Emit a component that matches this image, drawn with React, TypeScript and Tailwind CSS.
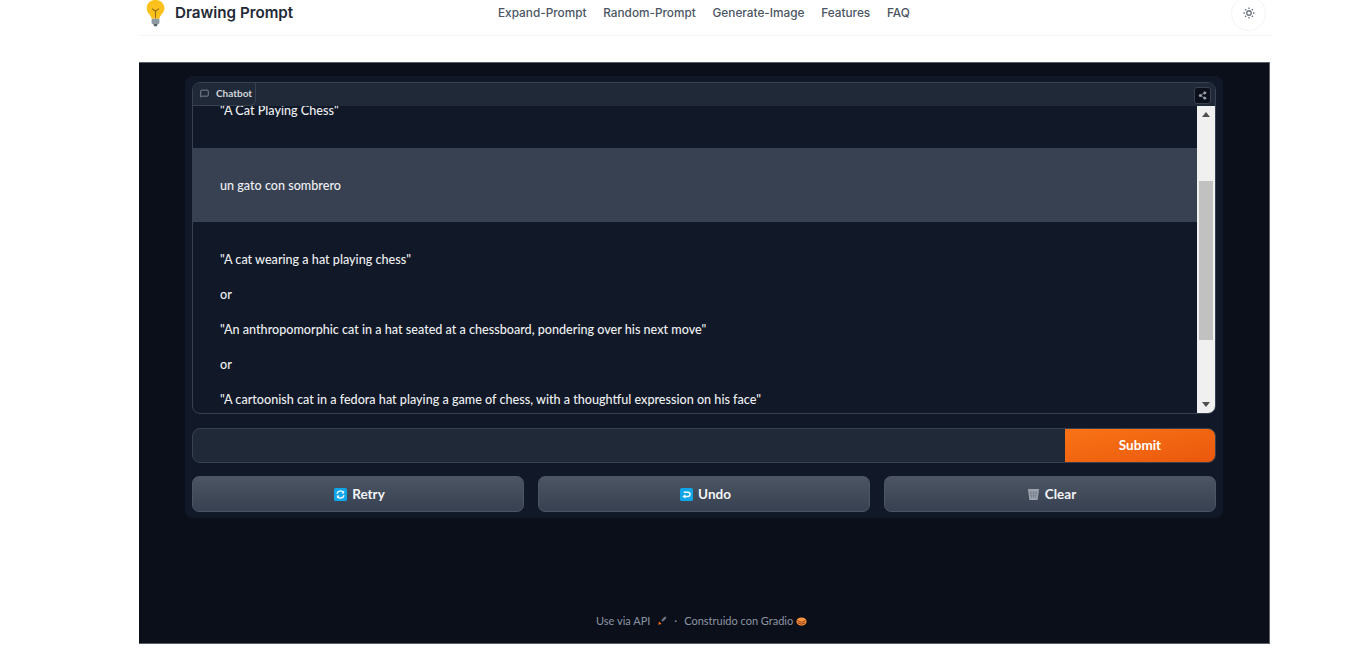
import { Share2, MessageSquare } from "lucide-react";

const NAV = ["Expand-Prompt", "Random-Prompt", "Generate-Image", "Features", "FAQ"];

function Bulb() {
  return (
    <svg viewBox="0 0 24 32" className="h-[28px] w-[21px] shrink-0">
      <path d="M12 1C6 1 2 5.2 2 10.5c0 3.4 1.7 5.6 3.3 7.6 1.2 1.5 2 2.8 2.2 4.4h9c.2-1.6 1-2.9 2.2-4.4 1.6-2 3.5-4.2 3.5-7.6C22 5.2 18 1 12 1z" fill="#fcc21b" />
      <path d="M8 11l4 3 4-3M12 14v8" fill="none" stroke="#8a6a12" strokeWidth="1.2" />
      <rect x="7.5" y="22.5" width="9" height="6" rx="1.5" fill="#8d9aa3" />
      <path d="M9.5 28.5h5l-1 2.5h-3z" fill="#57636b" />
    </svg>
  );
}

function Sun() {
  return (
    <svg viewBox="0 0 24 24" className="h-[12px] w-[12px]" fill="none" stroke="#6b7280" strokeWidth="2.6">
      <circle cx="12" cy="12" r="4.5" />
      <path d="M12 1v3M12 20v3M1 12h3M20 12h3M4.2 4.2l2.2 2.2M17.6 17.6l2.2 2.2M4.2 19.8l2.2-2.2M17.6 6.4l2.2-2.2" />
    </svg>
  );
}

function RetryIcon() {
  return (
    <svg viewBox="0 0 14 14" className="h-[13px] w-[13px]">
      <rect width="14" height="14" rx="2" fill="#0ea5e9" />
      <path d="M3.2 6.2A3.9 3.9 0 0 1 10 4.6M10.8 7.8A3.9 3.9 0 0 1 4 9.4" fill="none" stroke="#fff" strokeWidth="1.4" />
      <path d="M10.9 2.8v3h-3zM3.1 11.2v-3h3z" fill="#fff" />
    </svg>
  );
}

function UndoIcon() {
  return (
    <svg viewBox="0 0 14 14" className="h-[13px] w-[13px]">
      <rect width="14" height="14" rx="2" fill="#0ea5e9" />
      <path d="M4 4.5h4.5a2.2 2.2 0 0 1 0 4.6H5" fill="none" stroke="#fff" strokeWidth="1.5" />
      <path d="M5.8 6.8v4.6L2.6 9.1z" fill="#fff" />
    </svg>
  );
}

function BinIcon() {
  return (
    <svg viewBox="0 0 14 14" className="h-[14px] w-[13px]">
      <path d="M1 1.5h12l-1.6 12H2.6z" fill="#9ca3af" />
      <path d="M4 3.5l.8 8M7 3.5v8M10 3.5l-.8 8M3 6h8M3.4 9h7.2" stroke="#6b7280" strokeWidth="0.7" fill="none" />
    </svg>
  );
}

function ActionButton({ icon, label }: { icon: React.ReactNode; label: string }) {
  return (
    <button className="flex h-[36px] flex-1 items-center justify-center gap-[5px] rounded-[7px] border border-[#4b5563] bg-gradient-to-b from-[#4b5563] to-[#374151] pl-[3px] text-[13.5px] font-bold text-[#f3f4f6]">
      {icon}
      {label}
    </button>
  );
}

export default function App() {
  return (
    <div className="h-[648px] overflow-hidden bg-white font-['Lato',sans-serif]">
      <header className="ml-[139px] flex h-[36px] w-[1133px] items-start border-b border-[#f3f4f6]">
        <div className="flex h-[26px] w-full items-center">
          <div className="ml-[6px] flex w-[353px] shrink-0 items-center gap-[9px]">
            <Bulb />
            <span className="font-['Inter',sans-serif] text-[15.2px] font-semibold whitespace-nowrap text-[#1f2937]">Drawing Prompt</span>
          </div>
          <nav className="flex gap-[16.75px] pt-[2px] font-['Inter',sans-serif] text-[11.8px] font-medium whitespace-nowrap text-[#4b5563]">
            {NAV.map((item) => (
              <a key={item}>{item}</a>
            ))}
          </nav>
          <div className="ml-auto mr-[6px] flex h-[35px] w-[35px] shrink-0 items-center justify-center rounded-full border border-[#f3f4f6]">
            <Sun />
          </div>
        </div>
      </header>

      <main className="mt-[26px] ml-[139px] flex h-[582px] w-[1131px] flex-col items-start border-y border-r border-[#5b6068] bg-[#0b0f19] pt-[13px]">
        <section className="ml-[46px] flex w-[1038px] flex-col gap-[14px] rounded-lg bg-[#111827] p-[7px] pt-[6px] pb-[6px]">
          <div className="w-[1024px] overflow-hidden rounded-lg border border-[#374151] bg-[#111827]">
            <div className="flex h-[23px] items-start justify-between bg-[#1f2937]">
              <div className="flex h-[23px] w-[63px] items-center gap-[7px] rounded-br-md border-r border-b border-[#374151] bg-[#1f2937] pb-[1px] pl-[7px] text-[10px] font-bold text-[#d1d5db]">
                <MessageSquare className="h-[9px] w-[9px] text-[#9ca3af]" />
                Chatbot
              </div>
              <div className="mt-[4px] mr-[4px] flex h-[17px] w-[17px] items-center justify-center rounded-[3px] border border-[#374151] bg-[#0b0f19]">
                <Share2 className="h-[9px] w-[9px] text-[#9ca3af]" fill="#9ca3af" />
              </div>
            </div>
            <div className="flex h-[307px]">
              <div className="flex-1 overflow-hidden text-[12.6px] font-medium text-[#eef0f3]">
                <div className="h-[42px] pl-[27px] leading-[9px]">"A Cat Playing Chess"</div>
                <div className="flex h-[74px] items-center bg-[#374151] pt-[2px] pl-[27px]">un gato con sombrero</div>
                <div className="flex flex-col gap-[17px] pt-[29px] pl-[27px]">
                  <p className="leading-[18px]">"A cat wearing a hat playing chess"</p>
                  <p className="leading-[18px]">or</p>
                  <p className="leading-[18px]">"An anthropomorphic cat in a hat seated at a chessboard, pondering over his next move"</p>
                  <p className="leading-[18px]">or</p>
                  <p className="leading-[18px]">"A cartoonish cat in a fedora hat playing a game of chess, with a thoughtful expression on his face"</p>
                </div>
              </div>
              <div className="flex w-[18px] shrink-0 flex-col items-center bg-[#f0f0f0] py-[6px]">
                <div className="h-0 w-0 border-x-[4px] border-b-[5px] border-x-transparent border-b-[#505050]" />
                <div className="mt-[64px] h-[159px] w-[14px] bg-[#c1c1c1]" />
                <div className="mt-auto h-0 w-0 border-x-[4px] border-t-[5px] border-x-transparent border-t-[#505050]" />
              </div>
            </div>
          </div>

          <div className="flex h-[35px] w-[1024px] overflow-hidden rounded-lg border border-[#374151] bg-[#1f2937]">
            <div className="flex-1" />
            <button className="w-[150px] bg-gradient-to-br from-[#f97316] to-[#ea580c] text-[13.5px] font-bold text-white">Submit</button>
          </div>

          <div className="-mt-[1px] flex w-[1024px] gap-[14px]">
            <ActionButton icon={<RetryIcon />} label="Retry" />
            <ActionButton icon={<UndoIcon />} label="Undo" />
            <ActionButton icon={<BinIcon />} label="Clear" />
          </div>
        </section>

        <footer className="mt-[95px] ml-[457px] flex items-center text-[11px] whitespace-nowrap text-[#8b95a5]">
          <span>Use via API</span>
          <svg viewBox="0 0 12 12" className="ml-[7px] h-[10px] w-[10px]">
            <path d="M5 5l4-4 2 0 0 2-4 4z" fill="#6b7280" />
            <path d="M1.5 10.5l1-4 3 3z" fill="#f97316" />
          </svg>
          <span className="mx-[7px]">·</span>
          <span>Construido con Gradio</span>
          <svg viewBox="0 0 12 12" className="ml-[3px] h-[11px] w-[11px]">
            <path d="M6 1.5c3 0 5.5 1.5 5.5 4.5S9 10.5 6 10.5.5 9 .5 6 3 1.5 6 1.5z" fill="#fb923c" />
            <path d="M1.5 5l4.5 2 4.5-2M2 7.5l4 1.5 4-1.5" fill="none" stroke="#7c2d12" strokeWidth="0.9" />
          </svg>
        </footer>
      </main>
    </div>
  );
}
